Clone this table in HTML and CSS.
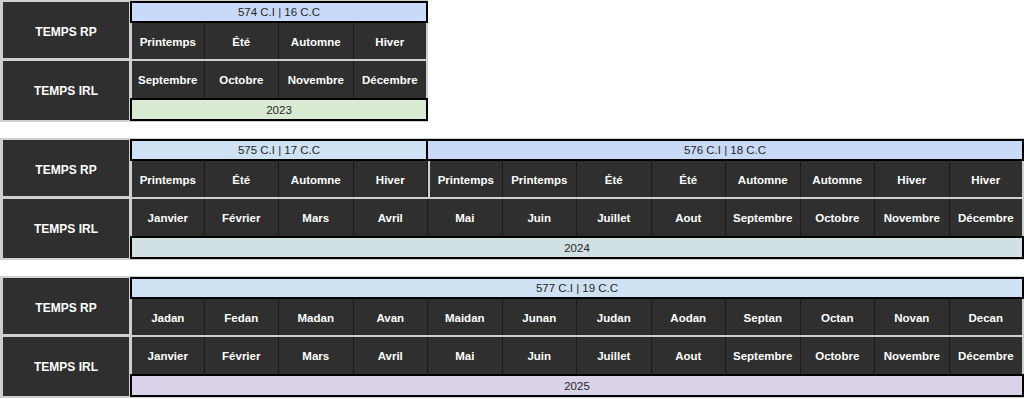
FILE: index.html
```html
<!DOCTYPE html>
<html lang="fr">
<head>
  <meta charset="UTF-8" />
  <meta name="viewport" content="width=device-width, initial-scale=1.0"/>
  <title>Calendrier RP / IRL</title>
  <link rel="stylesheet" href="styles.css">
</head>
<body>

  <!-- 2023 -->
  <div class="sheet cols-4">
    <div class="label rp">TEMPS RP</div>
    <div class="era blue span-4">574 C.I | 16 C.C</div>

    <div class="cell season first">Printemps</div>
    <div class="cell season">Été</div>
    <div class="cell season">Automne</div>
    <div class="cell season last">Hiver</div>

    <div class="label irl">TEMPS IRL</div>
    <div class="cell month first">Septembre</div>
    <div class="cell month">Octobre</div>
    <div class="cell month">Novembre</div>
    <div class="cell month last">Décembre</div>

    <div class="year green">2023</div>
  </div>

  <!-- 2024 -->
  <div class="sheet cols-12">
    <div class="label rp">TEMPS RP</div>
    <div class="era sky span-4">575 C.I | 17 C.C</div>
    <div class="era blue span-8">576 C.I | 18 C.C</div>

    <div class="cell season first">Printemps</div>
    <div class="cell season">Été</div>
    <div class="cell season">Automne</div>
    <div class="cell season">Hiver</div>
    <div class="cell season split">Printemps</div>
    <div class="cell season">Printemps</div>
    <div class="cell season">Été</div>
    <div class="cell season">Été</div>
    <div class="cell season">Automne</div>
    <div class="cell season">Automne</div>
    <div class="cell season">Hiver</div>
    <div class="cell season last">Hiver</div>

    <div class="label irl">TEMPS IRL</div>
    <div class="cell month first">Janvier</div>
    <div class="cell month">Février</div>
    <div class="cell month">Mars</div>
    <div class="cell month">Avril</div>
    <div class="cell month">Mai</div>
    <div class="cell month">Juin</div>
    <div class="cell month">Juillet</div>
    <div class="cell month">Aout</div>
    <div class="cell month">Septembre</div>
    <div class="cell month">Octobre</div>
    <div class="cell month">Novembre</div>
    <div class="cell month last">Décembre</div>

    <div class="year cyan">2024</div>
  </div>

  <!-- 2025 -->
  <div class="sheet cols-12">
    <div class="label rp">TEMPS RP</div>
    <div class="era sky span-12">577 C.I | 19 C.C</div>

    <div class="cell season first">Jadan</div>
    <div class="cell season">Fedan</div>
    <div class="cell season">Madan</div>
    <div class="cell season">Avan</div>
    <div class="cell season">Maidan</div>
    <div class="cell season">Junan</div>
    <div class="cell season">Judan</div>
    <div class="cell season">Aodan</div>
    <div class="cell season">Septan</div>
    <div class="cell season">Octan</div>
    <div class="cell season">Novan</div>
    <div class="cell season last">Decan</div>

    <div class="label irl">TEMPS IRL</div>
    <div class="cell month first">Janvier</div>
    <div class="cell month">Février</div>
    <div class="cell month">Mars</div>
    <div class="cell month">Avril</div>
    <div class="cell month">Mai</div>
    <div class="cell month">Juin</div>
    <div class="cell month">Juillet</div>
    <div class="cell month">Aout</div>
    <div class="cell month">Septembre</div>
    <div class="cell month">Octobre</div>
    <div class="cell month">Novembre</div>
    <div class="cell month last">Décembre</div>

    <div class="year purple">2025</div>
  </div>

</body>
</html>
```
FILE: styles.css
```css
body {
  margin: 0;
  background: #fff;
  font-family: "Liberation Sans", Arial, sans-serif;
}

/* one calendar block: label column + N month columns */
.sheet {
  display: grid;
  width: max-content;
  grid-template-rows: 22px 36px 2px 37px 23px;
  padding: 1px 0 1px 2px;
  margin-bottom: 16px;
  background: #cfcfcf;
}

.cols-4 { grid-template-columns: 128px repeat(4, 74.5px); }
.cols-12 { grid-template-columns: 128px repeat(12, 74.5px); }

.label {
  grid-column: 1;
  display: flex;
  align-items: center;
  justify-content: center;
  margin: 1px;
  background: #2f2f2f;
  color: #fff;
  font-weight: bold;
  font-size: 12px;
}

.label.rp { grid-row: 1 / 3; padding-top: 3px; }
.label.irl { grid-row: 4 / 6; margin-top: 0; }

.era,
.year {
  display: flex;
  align-items: center;
  justify-content: center;
  border: 2px solid #000;
  color: #262626;
  font-size: 11.5px;
}

.era { grid-row: 1; }
.era + .era { margin-left: -2px; }

.span-4 { grid-column: span 4; }
.span-8 { grid-column: span 8; }
.span-12 { grid-column: span 12; }

.year {
  grid-row: 5;
  grid-column: 2 / -1;
}

.cell {
  display: flex;
  align-items: center;
  justify-content: center;
  background: #2f2f2f;
  border-right: 1px solid #1a1a1a;
  color: #fff;
  font-weight: bold;
  font-size: 11.5px;
}

.season { grid-row: 2; padding-top: 1px; }
.month { grid-row: 4; }

.cell.first,
.cell.split { border-left: 2px solid #cfcfcf; }
.cell.last { border-right: 2px solid #cfcfcf; }

/* header / year colours */
.blue { background: #c9daf8; }
.sky { background: #cfe2f3; }
.green { background: #d9ead3; }
.cyan { background: #d0e0e3; }
.purple { background: #d9d2e9; }
```
